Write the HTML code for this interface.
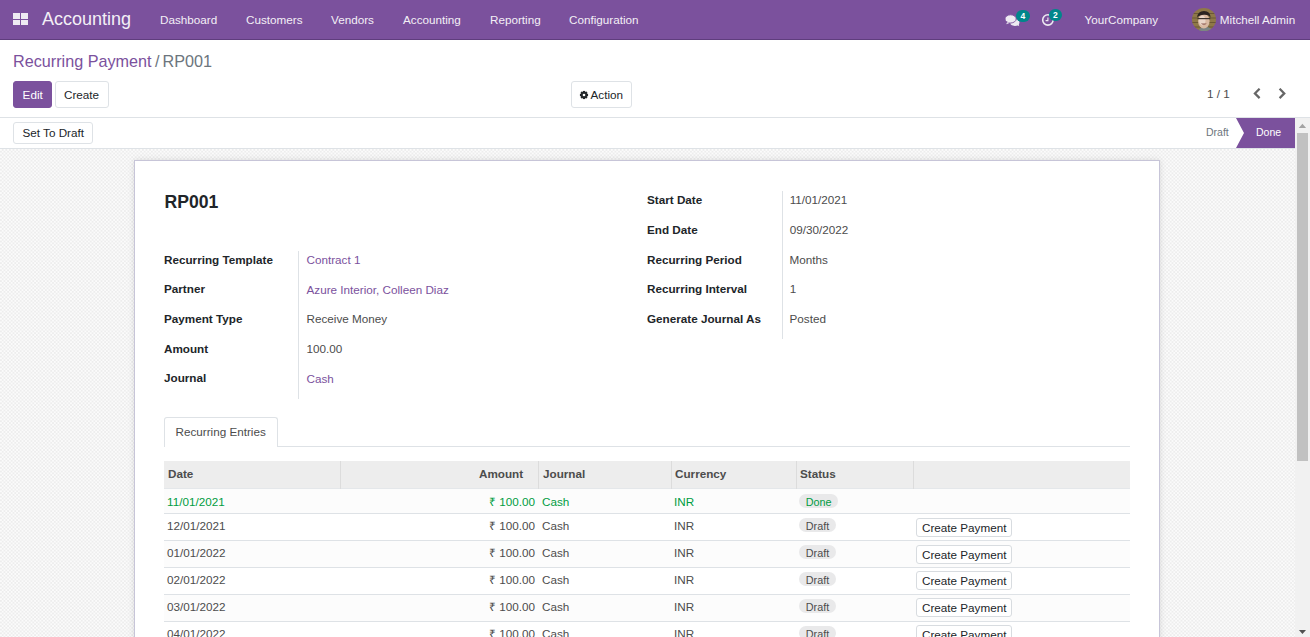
<!DOCTYPE html>
<html><head><meta charset="utf-8">
<style>
html,body{margin:0;padding:0;width:1310px;height:637px;overflow:hidden;background:#fff;}
body{font-family:"Liberation Sans",sans-serif;font-size:11.7px;color:#4c4c4c;position:relative;}
.a{position:absolute;white-space:nowrap;line-height:12px;}
#nav{position:absolute;left:0;top:0;width:1310px;height:39px;background:#7B519D;border-bottom:1px solid #5f3d7d;}
#nav .a{color:#f3eff6;}
.grid{position:absolute;background:#eeeaf2;width:7px;height:5.5px;}
.nbadge{position:absolute;height:12.5px;border-radius:6.5px;background:#00868b;color:#fff;font-size:8.5px;font-weight:bold;line-height:12px;text-align:center;}
#cp{position:absolute;left:0;top:40px;width:1310px;height:77px;border-bottom:1px solid #dee2e6;background:#fff;}
.btn{position:absolute;box-sizing:border-box;border:1px solid #dee2e6;border-radius:3px;background:#fff;color:#212529;}
#sb{position:absolute;left:0;top:118px;width:1295px;height:30px;border-bottom:1px solid #dee2e6;background:#fff;}
#bg{position:absolute;left:0;top:149px;width:1295px;height:488px;
 background-color:#f6f6f6;
 background-image:repeating-conic-gradient(#ededed 0 25%, #fbfbfb 0 50%);
 background-size:3.6px 3.6px;}
#scroll{position:absolute;left:1295px;top:118px;width:15px;height:519px;background:#f1f1f1;}
#thumb{position:absolute;left:2px;top:15px;width:11px;height:328px;background:#c1c1c1;}
#sheet{position:absolute;left:134px;top:160px;width:1024px;height:500px;background:#fff;border:1px solid #c7c5d8;box-shadow:0 0 6px rgba(0,0,0,0.12);}
.lbl{font-weight:bold;color:#212529;}
.lnk{color:#7B519D;}
.v{color:#4c4c4c;}
.sep{position:absolute;width:1px;background:#dee2e6;}
.hline{position:absolute;height:1px;background:#dee2e6;}
.row{position:absolute;left:164px;width:966px;}
.th{font-weight:bold;color:#4c4c4c;}
.g{color:#009c42;}
.badge{position:absolute;left:799px;height:14.4px;border-radius:7.2px;background:#e9e9ea;font-size:10.8px;line-height:15.5px;padding:1px 0 0 6.8px;box-sizing:border-box;}
.cpbtn{position:absolute;left:916px;width:96px;height:19px;box-sizing:border-box;border:1px solid #d8dce0;border-radius:3px;background:#fff;color:#212529;}
.cpbtn span{position:absolute;left:5px;top:3px;line-height:12px;white-space:nowrap;}
</style></head><body>
<div id="nav">
  <div class="grid" style="left:13px;top:13px"></div>
  <div class="grid" style="left:21px;top:13px"></div>
  <div class="grid" style="left:13px;top:19.5px"></div>
  <div class="grid" style="left:21px;top:19.5px"></div>
  <div class="a" style="left:42px;top:10px;font-size:18px;line-height:18px;">Accounting</div>
  <div class="a" style="left:160px;top:14px;">Dashboard</div>
  <div class="a" style="left:246px;top:14px;">Customers</div>
  <div class="a" style="left:331px;top:14px;">Vendors</div>
  <div class="a" style="left:403px;top:14px;">Accounting</div>
  <div class="a" style="left:490px;top:14px;">Reporting</div>
  <div class="a" style="left:569px;top:14px;">Configuration</div>
  <!-- chat icon -->
  <svg style="position:absolute;left:1004px;top:13px" width="17" height="15" viewBox="0 0 17 15">
    <ellipse cx="10.8" cy="9.6" rx="4.6" ry="3.3" fill="#eeeaf2"/>
    <path d="M12.5 11.5 L15.2 13.3 L14.5 10.5 Z" fill="#eeeaf2"/>
    <ellipse cx="6.6" cy="5.9" rx="5.6" ry="4.1" fill="#eeeaf2" stroke="#7B519D" stroke-width="0.9"/>
    <path d="M3.2 9.2 L2.2 11.2 L6.2 9.8 Z" fill="#eeeaf2"/>
  </svg>
  <div class="nbadge" style="left:1015.5px;top:9.5px;width:14.5px;">4</div>
  <!-- clock icon -->
  <svg style="position:absolute;left:1041px;top:13px" width="15" height="15" viewBox="0 0 15 15">
    <circle cx="6.9" cy="6.9" r="5.2" fill="none" stroke="#eeeaf2" stroke-width="1.6"/>
    <path d="M6.9 4.5 V7.6 H4.6" fill="none" stroke="#eeeaf2" stroke-width="1.1"/>
  </svg>
  <div class="nbadge" style="left:1048.5px;top:8.8px;width:13.5px;line-height:12px;">2</div>
  <div class="a" style="left:1084.5px;top:14px;">YourCompany</div>
  <!-- avatar -->
  <svg style="position:absolute;left:1192px;top:8px" width="24" height="23" viewBox="0 0 24 23">
    <defs><clipPath id="av"><ellipse cx="12" cy="11.5" rx="12" ry="11.5"/></clipPath></defs>
    <g clip-path="url(#av)">
      <rect width="24" height="23" fill="#8f7848"/>
      <rect x="0" y="5" width="24" height="1" fill="#6b5834"/>
      <rect x="0" y="9.5" width="24" height="1" fill="#6b5834"/>
      <rect x="0" y="14" width="24" height="1" fill="#6b5834"/>
      <rect x="0" y="18.5" width="24" height="1" fill="#6b5834"/>
      <path d="M6 23 Q9 18.5 13 19 Q18 18.5 21 23 Z" fill="#7b8585"/>
      <ellipse cx="11.8" cy="13" rx="5.8" ry="7.6" fill="#d9b9a2"/>
      <ellipse cx="10.3" cy="12.5" rx="3.2" ry="5" fill="#ead6c8"/>
      <path d="M5.2 9.5 Q5.5 3 12 3 Q18.5 3 18.6 10 Q17 6.5 12 6.8 Q7.5 6.8 5.2 9.5 Z" fill="#2a2421"/>
      <rect x="5.5" y="10" width="12.8" height="1.2" fill="#3b332d"/>
      <path d="M8.8 15.5 Q11.8 18.2 14.8 15.5 Z" fill="#8c5a50"/>
    </g>
  </svg>
  <div class="a" style="left:1219.8px;top:14px;">Mitchell Admin</div>
</div>
<div id="cp">
  <div class="a lnk" style="left:13px;top:13px;font-size:16.2px;line-height:16px;">Recurring Payment</div><div class="a" style="left:155px;top:13px;font-size:16.2px;line-height:16px;color:#6c757d">/</div><div class="a" style="left:162.5px;top:13px;font-size:16.2px;line-height:16px;color:#6c757d">RP001</div>
  <div class="btn" style="left:13px;top:41px;width:39px;height:27px;background:#7B519D;border-color:#7B519D;"><div class="a" style="left:8.6px;top:7px;color:#fff">Edit</div></div>
  <div class="btn" style="left:55px;top:41px;width:54px;height:27px;"><div class="a" style="left:8px;top:7px;">Create</div></div>
  <div class="btn" style="left:571px;top:41px;width:61px;height:27px;">
    <svg style="position:absolute;left:6.6px;top:8.1px" width="10" height="10" viewBox="-5.4 -5.4 10.8 10.8"><g fill="#212529"><rect x="-1.2" y="-4.4" width="2.4" height="2.2" transform="rotate(0)"/><rect x="-1.2" y="-4.4" width="2.4" height="2.2" transform="rotate(45)"/><rect x="-1.2" y="-4.4" width="2.4" height="2.2" transform="rotate(90)"/><rect x="-1.2" y="-4.4" width="2.4" height="2.2" transform="rotate(135)"/><rect x="-1.2" y="-4.4" width="2.4" height="2.2" transform="rotate(180)"/><rect x="-1.2" y="-4.4" width="2.4" height="2.2" transform="rotate(225)"/><rect x="-1.2" y="-4.4" width="2.4" height="2.2" transform="rotate(270)"/><rect x="-1.2" y="-4.4" width="2.4" height="2.2" transform="rotate(315)"/><circle r="3.3"/></g><circle r="1.4" fill="#fff"/></svg>
    <div class="a" style="left:18.5px;top:7px;">Action</div></div>
  <div class="a" style="left:1207px;top:48px;color:#4c4c4c">1 / 1</div>
  <svg style="position:absolute;left:1253px;top:48px" width="9" height="12" viewBox="0 0 9 12"><path d="M6.6 0.7 L1.9 5.4 L6.6 10.1" fill="none" stroke="#666" stroke-width="2.2"/></svg>
  <svg style="position:absolute;left:1278px;top:48px" width="9" height="12" viewBox="0 0 9 12"><path d="M1.6 0.7 L6.3 5.4 L1.6 10.1" fill="none" stroke="#666" stroke-width="2.2"/></svg>
</div>
<div id="sb">
  <div class="btn" style="left:13px;top:4px;width:80px;height:22px;"><div class="a" style="left:8.5px;top:4.3px;">Set To Draft</div></div>
  <div class="a" style="left:1206px;top:8px;color:#6c757d;font-size:10.5px;">Draft</div>
  <svg style="position:absolute;left:1236px;top:0" width="59" height="30"><polygon points="0,0 59,0 59,30 0,30 8,15" fill="#7B519D"/></svg>
  <div class="a" style="left:1256px;top:8px;color:#fff;font-size:10.5px;">Done</div>
</div>
<div id="bg"></div>
<div id="scroll"><svg style="position:absolute;left:0;top:0" width="15" height="519" viewBox="0 0 15 519"><polygon points="3.8,9.9 11.1,9.9 7.45,5.8" fill="#a3a3a3"/><polygon points="3.9,511.9 11,511.9 7.45,516.1" fill="#505050"/></svg><div id="thumb"></div></div>
<div id="sheet"></div>

<!-- title -->
<div class="a" style="left:164.6px;top:193px;font-size:17.6px;line-height:18px;font-weight:bold;color:#212529;">RP001</div>

<!-- left group -->
<div class="sep" style="left:298px;top:251px;height:148px;"></div>
<div class="a lbl" style="left:164px;top:254px;">Recurring Template</div>
<div class="a lbl" style="left:164px;top:283px;">Partner</div>
<div class="a lbl" style="left:164px;top:313px;">Payment Type</div>
<div class="a lbl" style="left:164px;top:343px;">Amount</div>
<div class="a lbl" style="left:164px;top:372px;">Journal</div>
<div class="a lnk" style="left:306.5px;top:254px;">Contract 1</div>
<div class="a lnk" style="left:306.5px;top:284px;">Azure Interior, Colleen Diaz</div>
<div class="a v" style="left:306.5px;top:313px;">Receive Money</div>
<div class="a v" style="left:306.5px;top:343px;">100.00</div>
<div class="a lnk" style="left:306.5px;top:373px;">Cash</div>

<!-- right group -->
<div class="sep" style="left:782px;top:191px;height:148px;"></div>
<div class="a lbl" style="left:647px;top:194px;">Start Date</div>
<div class="a lbl" style="left:647px;top:224px;">End Date</div>
<div class="a lbl" style="left:647px;top:254px;">Recurring Period</div>
<div class="a lbl" style="left:647px;top:283px;">Recurring Interval</div>
<div class="a lbl" style="left:647px;top:313px;">Generate Journal As</div>
<div class="a v" style="left:789.7px;top:194px;">11/01/2021</div>
<div class="a v" style="left:789.7px;top:224px;">09/30/2022</div>
<div class="a v" style="left:789.5px;top:254px;">Months</div>
<div class="a v" style="left:789.7px;top:283px;">1</div>
<div class="a v" style="left:789.5px;top:313px;">Posted</div>

<!-- tabs -->
<div class="hline" style="left:164px;top:446px;width:966px;"></div>
<div style="position:absolute;left:164px;top:417px;width:114px;height:30px;box-sizing:border-box;border:1px solid #dee2e6;border-bottom:none;border-radius:3px 3px 0 0;background:#fff;"></div>
<div class="a" style="left:175.5px;top:426px;color:#4c4c4c;">Recurring Entries</div>

<!-- table -->
<div class="row" style="top:461px;height:27px;background:#ededed;"></div><div class="hline" style="left:164px;top:488px;width:966px;background:#e4e7ea;"></div>
<div class="sep" style="left:340px;top:461px;height:28px;background:#dcdcdc;"></div>
<div class="sep" style="left:538px;top:461px;height:28px;background:#dcdcdc;"></div>
<div class="sep" style="left:671px;top:461px;height:28px;background:#dcdcdc;"></div>
<div class="sep" style="left:796px;top:461px;height:28px;background:#dcdcdc;"></div>
<div class="sep" style="left:913px;top:461px;height:28px;background:#dcdcdc;"></div>
<div class="a th" style="left:168px;top:468px;">Date</div>
<div class="a th" style="left:479px;top:468px;">Amount</div>
<div class="a th" style="left:543px;top:468px;">Journal</div>
<div class="a th" style="left:675px;top:468px;">Currency</div>
<div class="a th" style="left:800px;top:468px;">Status</div>

<div class="row" style="top:489px;height:24px;background:#fcfcfc;"></div>
<div class="hline" style="left:164px;top:513px;width:966px;"></div>
<div class="row" style="top:540px;height:27px;background:#fcfcfc;"></div>
<div class="hline" style="left:164px;top:540px;width:966px;"></div>
<div class="hline" style="left:164px;top:567px;width:966px;"></div>
<div class="row" style="top:594px;height:27px;background:#fcfcfc;"></div>
<div class="hline" style="left:164px;top:594px;width:966px;"></div>
<div class="hline" style="left:164px;top:621px;width:966px;"></div>

<div class="a g" style="left:167px;top:496px;">11/01/2021</div>
<div class="a g" style="left:489px;top:496px;">₹ 100.00</div>
<div class="a g" style="left:542px;top:496px;">Cash</div>
<div class="a g" style="left:674px;top:496px;">INR</div>
<div class="badge g" style="top:494px;width:39px;">Done</div>

<div class="a" style="left:167px;top:520px;">12/01/2021</div>
<div class="a" style="left:489px;top:520px;">₹ 100.00</div>
<div class="a" style="left:542px;top:520px;">Cash</div>
<div class="a" style="left:674px;top:520px;">INR</div>
<div class="badge" style="top:518px;width:37px;">Draft</div>
<div class="cpbtn" style="top:518px;"><span>Create Payment</span></div>

<div class="a" style="left:167px;top:547px;">01/01/2022</div>
<div class="a" style="left:489px;top:547px;">₹ 100.00</div>
<div class="a" style="left:542px;top:547px;">Cash</div>
<div class="a" style="left:674px;top:547px;">INR</div>
<div class="badge" style="top:545px;width:37px;">Draft</div>
<div class="cpbtn" style="top:545px;"><span>Create Payment</span></div>

<div class="a" style="left:167px;top:574px;">02/01/2022</div>
<div class="a" style="left:489px;top:574px;">₹ 100.00</div>
<div class="a" style="left:542px;top:574px;">Cash</div>
<div class="a" style="left:674px;top:574px;">INR</div>
<div class="badge" style="top:572px;width:37px;">Draft</div>
<div class="cpbtn" style="top:571px;"><span>Create Payment</span></div>

<div class="a" style="left:167px;top:601px;">03/01/2022</div>
<div class="a" style="left:489px;top:601px;">₹ 100.00</div>
<div class="a" style="left:542px;top:601px;">Cash</div>
<div class="a" style="left:674px;top:601px;">INR</div>
<div class="badge" style="top:599px;width:37px;">Draft</div>
<div class="cpbtn" style="top:598px;"><span>Create Payment</span></div>

<div class="a" style="left:167px;top:628px;">04/01/2022</div>
<div class="a" style="left:489px;top:628px;">₹ 100.00</div>
<div class="a" style="left:542px;top:628px;">Cash</div>
<div class="a" style="left:674px;top:628px;">INR</div>
<div class="badge" style="top:626px;width:37px;">Draft</div>
<div class="cpbtn" style="top:625px;"><span>Create Payment</span></div>
</body></html>
